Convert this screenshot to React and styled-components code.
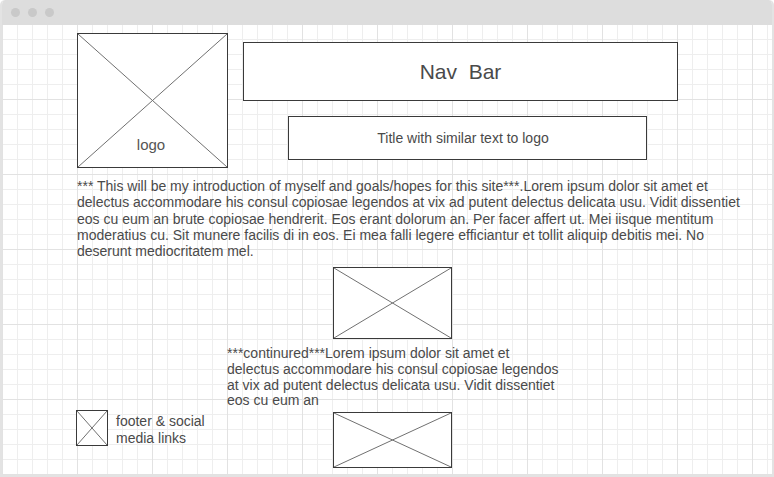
import React from "react";
import styled, { createGlobalStyle } from "styled-components";

const Global = createGlobalStyle`
  html, body { margin: 0; padding: 0; background: #ffffff; }
  body { font-family: "Liberation Sans", Arial, sans-serif; }
`;

const Window = styled.div`
  width: 774px;
  height: 477px;
  box-sizing: border-box;
  border: 2px solid #e3e3e3;
  border-top: none;
  border-radius: 5px 5px 0 0;
  display: flex;
  flex-direction: column;
  overflow: hidden;
  background: #fff;
`;

const TitleBar = styled.div`
  height: 25px;
  flex: none;
  background: #dddddd;
  display: flex;
  align-items: center;
  gap: 8px;
  padding-left: 11px;
  margin: 0 -2px;
  border-radius: 5px 5px 0 0;
`;

const Dot = styled.span`
  width: 9px;
  height: 9px;
  border-radius: 50%;
  background: #c9c9c9;
`;

const Canvas = styled.div`
  flex: 1;
  padding: 8px 0 0 75px;
  background-color: #fff;
  background-image:
    linear-gradient(to right, #e2e2e2 1px, transparent 1px),
    linear-gradient(to bottom, #e2e2e2 1px, transparent 1px),
    linear-gradient(to right, #eeeeee 1px, transparent 1px),
    linear-gradient(to bottom, #eeeeee 1px, transparent 1px);
  background-size: 75px 75px, 75px 75px, 15px 15px, 15px 15px;
  background-position: 0 -1px, 0 -1px, 0 -1px, 0 -1px;
  color: #4a4a4a;
  font-size: 14px;
`;

const Header = styled.div`
  display: flex;
  gap: 15px;
`;

const PlaceholderBox = styled.div`
  position: relative;
  flex: none;
  box-sizing: border-box;
  width: ${(p) => p.$w}px;
  height: ${(p) => p.$h}px;
  margin-left: ${(p) => p.$ml || 0}px;
  border: ${(p) => (p.$thin ? 1 : 1.5)}px solid #3a3a3a;
  background: #fff;
`;

const Cross = styled.svg`
  position: absolute;
  inset: 0;
  width: 100%;
  height: 100%;
`;

const LogoLabel = styled.span`
  position: absolute;
  left: 0;
  right: 3px;
  bottom: 14px;
  text-align: center;
  font-size: 15px;
  color: #555;
`;

const Placeholder = ({ w, h, ml, thin, children }) => (
  <PlaceholderBox $w={w} $h={h} $ml={ml} $thin={thin}>
    <Cross viewBox="0 0 100 100" preserveAspectRatio="none">
      <line x1="0" y1="0" x2="100" y2="100" stroke="#707070" strokeWidth="1" vectorEffect="non-scaling-stroke" />
      <line x1="100" y1="0" x2="0" y2="100" stroke="#707070" strokeWidth="1" vectorEffect="non-scaling-stroke" />
    </Cross>
    {children}
  </PlaceholderBox>
);

const HeaderRight = styled.div`
  display: flex;
  flex-direction: column;
  gap: 15px;
  padding-top: 9px;
`;

const Panel = styled.div`
  box-sizing: border-box;
  width: ${(p) => p.$w}px;
  height: ${(p) => p.$h}px;
  margin-left: ${(p) => p.$ml || 0}px;
  padding-right: ${(p) => p.$pr || 0}px;
  border: 1.5px solid #3a3a3a;
  background: #fff;
  display: flex;
  align-items: center;
  justify-content: center;
  font-size: ${(p) => p.$fs}px;
  color: #4a4a4a;
  white-space: pre;
`;

const Intro = styled.p`
  margin: 10px 0 0;
  line-height: 16.3px;
  white-space: nowrap;
`;

const Lower = styled.div`
  display: flex;
  margin-top: 8px;
`;

const LeftCol = styled.div`
  width: 150px;
  flex: none;
  display: flex;
  align-items: flex-end;
  padding-bottom: 21px;
`;

const Footer = styled.div`
  display: flex;
  align-items: flex-start;
  gap: 8px;
  margin-left: -1px;
`;

const FooterText = styled.div`
  padding-top: 3px;
  line-height: 17px;
`;

const MidCol = styled.div`
  display: flex;
  flex-direction: column;
`;

const Continued = styled.p`
  margin: 7px 0 3px;
  line-height: 15.6px;
  white-space: nowrap;
`;

export default function App() {
  return (
    <>
      <Global />
      <Window>
        <TitleBar>
          <Dot />
          <Dot />
          <Dot />
        </TitleBar>
        <Canvas>
          <Header>
            <Placeholder w={151} h={135}>
              <LogoLabel>logo</LogoLabel>
            </Placeholder>
            <HeaderRight>
              <Panel $w={435} $h={59} $fs={21}>{"Nav  Bar"}</Panel>
              <Panel $w={359} $h={44} $ml={45} $pr={9} $fs={14}>Title with similar text to logo</Panel>
            </HeaderRight>
          </Header>
          <Intro>
            *** This will be my introduction of myself and goals/hopes for this site***.Lorem ipsum dolor sit amet et
            <br />
            delectus accommodare his consul copiosae legendos at vix ad putent delectus delicata usu. Vidit dissentiet
            <br />
            eos cu eum an brute copiosae hendrerit. Eos erant dolorum an. Per facer affert ut. Mei iisque mentitum
            <br />
            moderatius cu. Sit munere facilis di in eos. Ei mea falli legere efficiantur et tollit aliquip debitis mei. No
            <br />
            deserunt mediocritatem mel.
          </Intro>
          <Lower>
            <LeftCol>
              <Footer>
                <Placeholder w={32} h={36} thin />
                <FooterText>
                  footer &amp; social
                  <br />
                  media links
                </FooterText>
              </Footer>
            </LeftCol>
            <MidCol>
              <Placeholder w={119} h={72} ml={106} />
              <Continued>
                ***continured***Lorem ipsum dolor sit amet et
                <br />
                delectus accommodare his consul copiosae legendos
                <br />
                at vix ad putent delectus delicata usu. Vidit dissentiet
                <br />
                eos cu eum an
              </Continued>
              <Placeholder w={119} h={56} ml={106} />
            </MidCol>
          </Lower>
        </Canvas>
      </Window>
    </>
  );
}
